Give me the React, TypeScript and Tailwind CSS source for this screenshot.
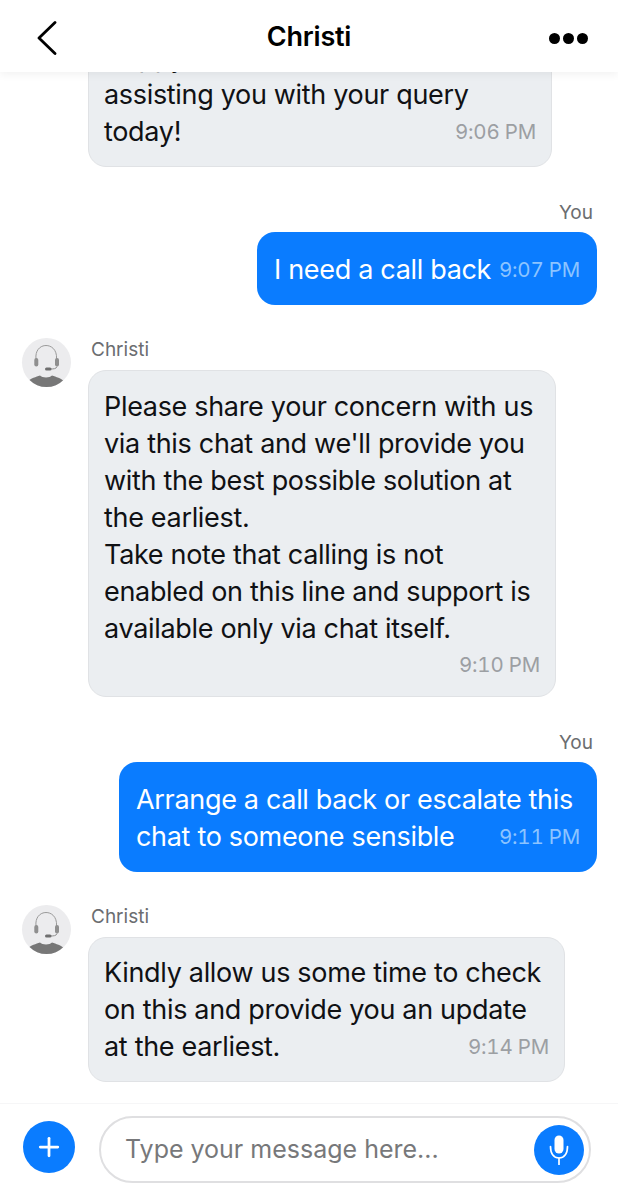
import { Plus } from "lucide-react";

const font = "font-['Inter','Liberation_Sans',sans-serif]";

function Time(props: { label: string, mine?: boolean }) {
  return (
    <span className={`text-[20.5px] leading-[37px] tracking-[-0.2px] tabular-nums whitespace-nowrap ${props.mine ? "text-[#8cc4ff]" : "text-[#9c9fa3]"}`}>
      {props.label}
    </span>
  );
}

function Avatar() {
  return (
    <svg width="50" height="50" viewBox="0 0 50 50" className="shrink-0">
      <defs>
        <clipPath id="avatar-clip"><circle cx="24.5" cy="24.5" r="24.5" /></clipPath>
      </defs>
      <circle cx="25.5" cy="24.5" r="24.5" fill="#ececee" />
      <g transform="translate(1 0)">
        <g clipPath="url(#avatar-clip)">
          <path d="M5 44 C9 40 14 39 18 37.5 C20 40 28 40 30 37.5 C34 39 39 40 43 44 L43 50 L5 50 Z" fill="#777777" />
        </g>
        <path d="M14 21 C12 3 36 3 34.5 21" fill="none" stroke="#9a9a9a" strokeWidth="1" />
        <rect x="12.3" y="20" width="4" height="8.5" rx="2" fill="#8f8f8f" />
        <rect x="33" y="20" width="4" height="8.5" rx="2" fill="#8f8f8f" />
        <path d="M35 28.5 C34.5 31 31 31 28 31" fill="none" stroke="#8f8f8f" strokeWidth="1" />
        <rect x="23" y="29.5" width="6.5" height="3" rx="1.5" fill="#6f6f6f" />
      </g>
    </svg>
  );
}

function Incoming(props: { lines: string[], time: string, width: string, timeBelow?: boolean }) {
  const last = props.lines[props.lines.length - 1];
  return (
    <div className={`${props.width} rounded-[18px] bg-[#ebeef1] border border-[#e0e2e5] pl-[15px] pr-[15px] ${props.timeBelow ? "pt-[17px] pb-[13px]" : "pt-[16px] pb-[16px]"} text-[27px] leading-[37px] tracking-[-0.32px] text-[#101114]`}>
      {props.lines.slice(0, -1).map((l) => (
        <div key={l} className="whitespace-nowrap">{l}</div>
      ))}
      <div className="flex justify-between items-end whitespace-nowrap">
        <span>{last}</span>
        {!props.timeBelow && <Time label={props.time} />}
      </div>
      {props.timeBelow && (
        <div className="flex justify-end -mt-[1px]"><Time label={props.time} /></div>
      )}
    </div>
  );
}

function Outgoing(props: { lines: string[], time: string, width: string }) {
  const last = props.lines[props.lines.length - 1];
  return (
    <div className="flex flex-col items-end">
      <div className="text-[19px] leading-[24px] text-[#6b6d70] pr-[4px]">You</div>
      <div className={`${props.width} mt-[7px] rounded-[18px] bg-[#0a7cff] text-white pl-[17px] pr-[17px] pt-[19px] pb-[17px] text-[27px] leading-[37px] tracking-[-0.32px]`}>
        {props.lines.slice(0, -1).map((l) => (
          <div key={l} className="whitespace-nowrap">{l}</div>
        ))}
        <div className="flex justify-between items-end whitespace-nowrap">
          <span>{last}</span>
          <Time label={props.time} mine />
        </div>
      </div>
    </div>
  );
}

function AgentName() {
  return <div className="text-[19px] leading-[24px] text-[#6b6d70] ml-[3px]">Christi</div>;
}

export default function App() {
  return (
    <div className={`${font} w-[618px] h-[1200px] bg-white flex flex-col overflow-hidden`}>
      <header className="relative z-10 h-[72px] shrink-0 bg-white shadow-[0_3px_8px_rgba(0,0,0,0.05)] flex items-center justify-between pl-[37px] pr-[30px]">
        <svg width="20" height="34" viewBox="0 0 20 34" fill="none" className="mt-[4px]">
          <path d="M18 1.5 L2 17 L18 32.5" stroke="black" strokeWidth="2.8" strokeLinecap="round" strokeLinejoin="round" />
        </svg>
        <div className="text-[27px] font-semibold text-black tracking-[-0.2px] mt-[3px] ml-[12px]">Christi</div>
        <div className="flex gap-[3px] mt-[4px]">
          <span className="w-[11px] h-[11px] rounded-full bg-black" />
          <span className="w-[11px] h-[11px] rounded-full bg-black" />
          <span className="w-[11px] h-[11px] rounded-full bg-black" />
        </div>
      </header>

      <main className="flex-1 overflow-hidden pl-[21px] pr-[21px]">
        <div className="-mt-[50px] ml-[67px]">
          <Incoming
            width="w-[464px]"
            lines={["Happy to be", "assisting you with your query", "today!"]}
            time="9:06 PM"
          />
        </div>

        <div className="mt-[34px]">
          <Outgoing width="w-[340px]" lines={["I need a call back"]} time="9:07 PM" />
        </div>

        <div className="mt-[33px] flex gap-[17px]">
          <Avatar />
          <div>
            <AgentName />
            <div className="mt-[8px]">
              <Incoming
                width="w-[468px]"
                timeBelow
                lines={[
                  "Please share your concern with us",
                  "via this chat and we'll provide you",
                  "with the best possible solution at",
                  "the earliest.",
                  "Take note that calling is not",
                  "enabled on this line and support is",
                  "available only via chat itself.",
                ]}
                time="9:10 PM"
              />
            </div>
          </div>
        </div>

        <div className="mt-[34px]">
          <Outgoing
            width="w-[478px]"
            lines={["Arrange a call back or escalate this", "chat to someone sensible"]}
            time="9:11 PM"
          />
        </div>

        <div className="mt-[33px] flex gap-[17px]">
          <Avatar />
          <div>
            <AgentName />
            <div className="mt-[8px]">
              <Incoming
                width="w-[477px]"
                lines={[
                  "Kindly allow us some time to check",
                  "on this and provide you an update",
                  "at the earliest.",
                ]}
                time="9:14 PM"
              />
            </div>
          </div>
        </div>
      </main>

      <footer className="h-[97px] shrink-0 bg-white border-t border-[#f6f6f7] flex items-start pl-[23px] pr-[27px] pt-[12px] gap-[24px]">
        <div className="w-[52px] h-[52px] mt-[5px] rounded-full bg-[#0a7cff] flex items-center justify-center">
          <Plus size={30} strokeWidth={2.2} className="text-white" />
        </div>
        <div className="flex-1 h-[67px] rounded-full border-2 border-[#dfdfe1] flex items-center justify-between pl-[24px] pr-[5px]">
          <span className="text-[25px] text-[#77787a] tracking-[0px]">Type your message here...</span>
          <div className="w-[50px] h-[50px] rounded-full bg-[#0a7cff] flex items-center justify-center">
            <svg width="20" height="30" viewBox="0 0 20 30" fill="none">
              <rect x="5.5" y="0.5" width="9" height="18" rx="4.5" fill="white" />
              <path d="M1.5 11.5 C1.5 19 5 23 10 23 C15 23 18.5 19 18.5 11.5" stroke="white" strokeWidth="1.7" strokeLinecap="round" />
              <path d="M10 23 L10 29.5" stroke="white" strokeWidth="1.7" strokeLinecap="round" />
            </svg>
          </div>
        </div>
      </footer>
    </div>
  );
}
